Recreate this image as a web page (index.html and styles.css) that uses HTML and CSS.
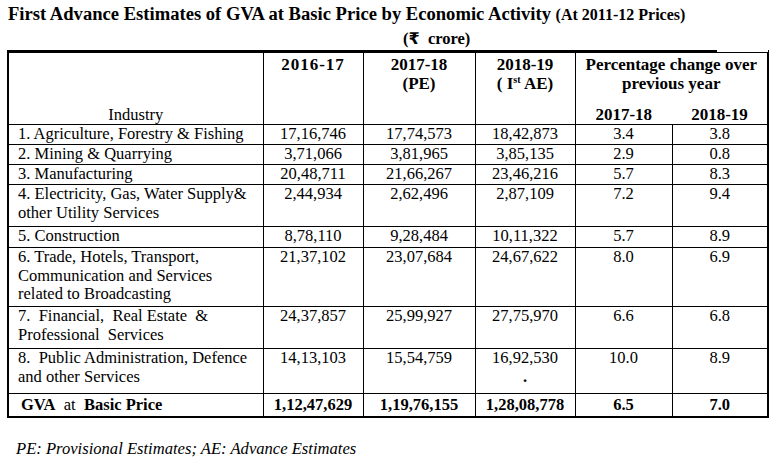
FILE: index.html
```html
<!DOCTYPE html>
<html>
<head>
<meta charset="utf-8">
<link rel="stylesheet" href="styles.css">
</head>
<body>
<div class="page">
  <h1 class="title">First Advance Estimates of GVA at Basic Price by Economic Activity <span class="title-sub">(At 2011-12 Prices)</span></h1>
  <div class="unit">(<span class="rupee">₹</span>&nbsp; crore)</div>
  <table class="gva">
    <colgroup>
      <col class="c-ind">
      <col class="c-a">
      <col class="c-b">
      <col class="c-c">
      <col class="c-d">
      <col class="c-e">
    </colgroup>
    <thead>
      <tr class="hr-top">
        <th rowspan="2" class="h-ind">Industry</th>
        <th rowspan="2" class="h-yr h-wide">2016-17</th>
        <th rowspan="2" class="h-yr">2017-18<br>(PE)</th>
        <th rowspan="2" class="h-yr">2018-19<br>( I<sup>st</sup> AE)</th>
        <th colspan="2" class="h-pct">Percentage change over<br>previous year</th>
      </tr>
      <tr class="hr-sub">
        <th class="h-sub h-sub-l">2017-18</th>
        <th class="h-sub h-sub-r">2018-19</th>
      </tr>
    </thead>
    <tbody>
      <tr class="r1"><td class="ind">1. Agriculture, Forestry &amp; Fishing</td><td>17,16,746</td><td>17,74,573</td><td>18,42,873</td><td>3.4</td><td>3.8</td></tr>
      <tr class="r1"><td class="ind">2. Mining &amp; Quarrying</td><td>3,71,066</td><td>3,81,965</td><td>3,85,135</td><td>2.9</td><td>0.8</td></tr>
      <tr class="r1"><td class="ind">3. Manufacturing</td><td>20,48,711</td><td>21,66,267</td><td>23,46,216</td><td>5.7</td><td>8.3</td></tr>
      <tr class="r2"><td class="ind">4. Electricity, Gas, Water Supply&amp;<br>other Utility Services</td><td>2,44,934</td><td>2,62,496</td><td>2,87,109</td><td>7.2</td><td>9.4</td></tr>
      <tr class="r5"><td class="ind">5. Construction</td><td>8,78,110</td><td>9,28,484</td><td>10,11,322</td><td>5.7</td><td>8.9</td></tr>
      <tr class="r3"><td class="ind">6. Trade, Hotels, Transport,<br>Communication and Services<br>related to Broadcasting</td><td>21,37,102</td><td>23,07,684</td><td>24,67,622</td><td>8.0</td><td>6.9</td></tr>
      <tr class="r2"><td class="ind">7.&nbsp; Financial,&nbsp; Real Estate&nbsp; &amp;<br>Professional&nbsp; Services</td><td>24,37,857</td><td>25,99,927</td><td>27,75,970</td><td>6.6</td><td>6.8</td></tr>
      <tr class="r8"><td class="ind">8.&nbsp; Public Administration, Defence<br>and other Services</td><td>14,13,103</td><td>15,54,759</td><td>16,92,530<br><span class="dot">.</span></td><td>10.0</td><td>8.9</td></tr>
      <tr class="total"><td class="ind tot-label"><b>GVA</b>&nbsp; at&nbsp; <b>Basic Price</b></td><td>1,12,47,629</td><td>1,19,76,155</td><td>1,28,08,778</td><td>6.5</td><td>7.0</td></tr>
    </tbody>
  </table>
  <p class="note">PE: Provisional Estimates; AE: Advance Estimates</p>
</div>
</body>
</html>
```
FILE: styles.css
```css
html, body {
  margin: 0;
  padding: 0;
  background: #ffffff;
}

.page {
  padding: 3px 0 0 7px;
  font-family: "Liberation Serif", "Times New Roman", serif;
  color: #000;
}

.title {
  margin: 0 0 0 1px;
  font-size: 18.6px;
  font-weight: bold;
  line-height: 22px;
  white-space: nowrap;
}

.title-sub {
  font-size: 16px;
}

.unit {
  margin: 4px 0 0 396px;
  font-size: 16.5px;
  font-weight: bold;
  line-height: 17px;
  height: 18px;
}

.rupee {
  font-family: "DejaVu Sans", sans-serif;
  font-size: 16px;
}

.gva {
  margin-top: 2px;
  border-collapse: collapse;
  table-layout: fixed;
  width: 760px;
  border-top: 3px solid #000;
  border-left: 2px solid #000;
  border-right: 2px solid #000;
  border-bottom: 2px solid #000;
  font-size: 16.5px;
  line-height: 18.5px;
}

.c-ind { width: 255px; }
.c-a { width: 100px; }
.c-b { width: 112px; }
.c-c { width: 100px; }
.c-d { width: 97px; }
.c-e { width: 96px; }

.gva th,
.gva td {
  border: 1px solid #000;
  padding: 0 2px;
  text-align: center;
  vertical-align: top;
}

.gva th {
  font-weight: bold;
  font-size: 17px;
}

.h-yr {
  padding-top: 3px !important;
}

.h-wide {
  letter-spacing: 1px;
}

.h-ind {
  font-weight: normal !important;
  font-size: 16.5px !important;
  vertical-align: bottom !important;
}

.hr-top {
  height: 53px;
}

.h-pct {
  position: relative;
  border-bottom: hidden !important;
  padding-top: 3px !important;
}

.h-pct::after {
  content: "";
  position: absolute;
  right: -1px;
  top: -3px;
  width: 51px;
  height: 2px;
  background: #ffffff;
  border-bottom: 1px solid #000;
}

.hr-sub {
  height: 20px;
}

.h-sub {
  vertical-align: bottom !important;
}

.h-sub-l {
  border-right: hidden !important;
}

sup {
  font-size: 10px;
  line-height: 0;
  vertical-align: 6px;
}

.gva td.ind {
  text-align: left;
  padding-left: 9px;
}

.r1 { height: 20px; }
.r5 { height: 21px; }
.r2 { height: 42px; }
.r3 { height: 59px; }
.r8 { height: 45px; }

.dot {
  font-weight: bold;
  line-height: 12px;
}

.total {
  height: 23px;
  font-weight: bold;
}

.total td {
  vertical-align: middle;
}

.tot-label {
  font-weight: normal;
  padding-left: 12px !important;
}

.note {
  margin: 22px 0 0 9px;
  font-size: 16.6px;
  font-style: italic;
  line-height: 18px;
}
```
